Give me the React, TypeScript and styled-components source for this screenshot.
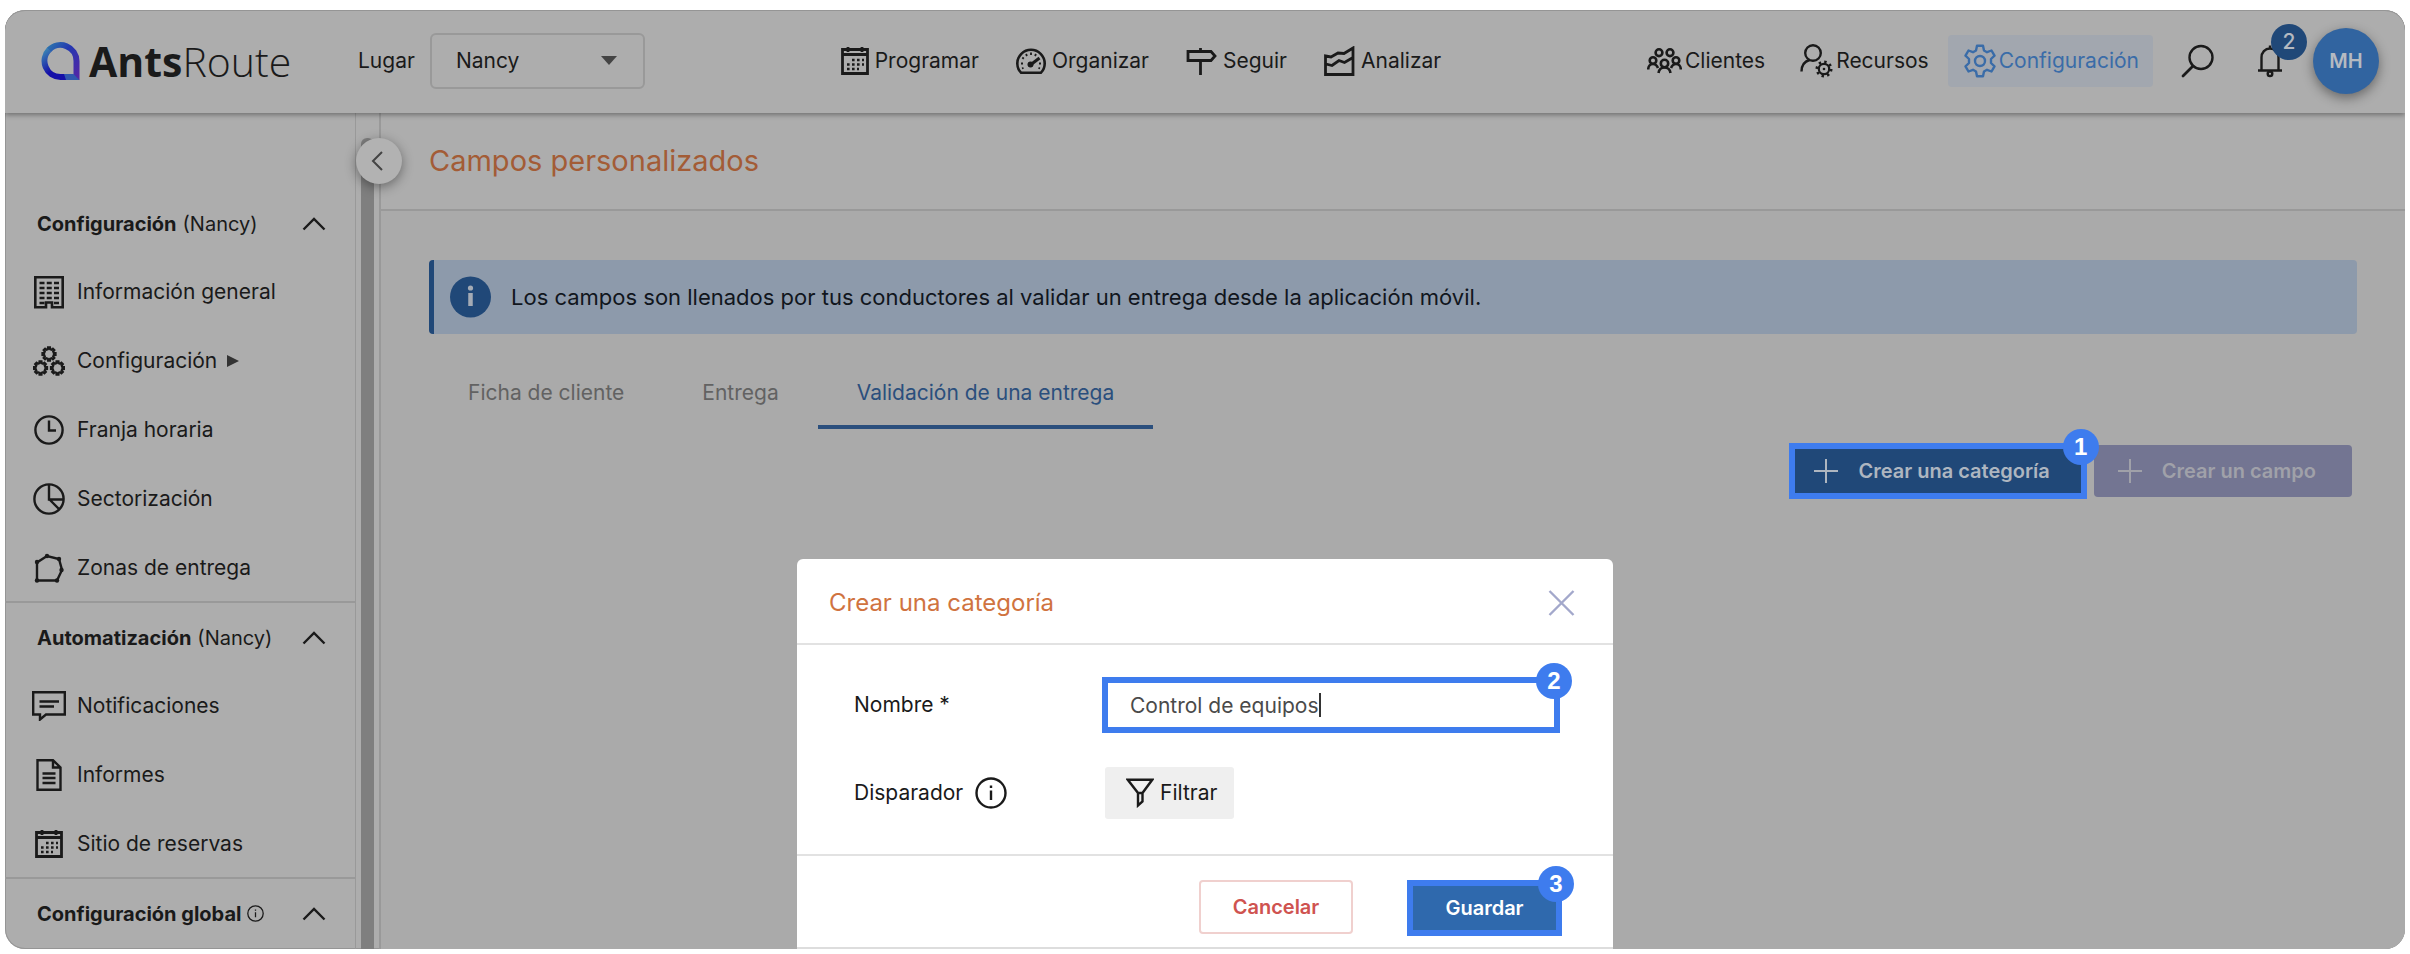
import React from 'react';
import styled, { createGlobalStyle, css } from 'styled-components';

const color = {
  surface: '#adadad',
  page: '#aaaaaa',
  line: '#999999',
  ink: '#1a1a1a',
  orange: '#a35c36',
  callout: '#3e7cee',
  navy: '#204878',
};

const GlobalStyle = createGlobalStyle`
  * { box-sizing: border-box; }
  body {
    margin: 0;
    padding: 10px 5px 5px;
    background: #ffffff;
    color: ${color.ink};
    font-family: Inter, "Liberation Sans", sans-serif;
    font-size: 21px;
    line-height: 28px;
  }
  button, input, select { font: inherit; color: inherit; }
  button { cursor: pointer; }
  h1, h2, p { margin: 0; font-weight: 400; }
  svg { display: block; flex: none; }
`;

const Frame = styled.div`
  position: relative;
  overflow: hidden;
  border-radius: 20px;
  background: ${color.surface};
  box-shadow: inset 0 0 0 1px #959595;
`;

/* ---------- Header ---------- */

const Header = styled.header`
  position: relative;
  z-index: 2;
  display: flex;
  align-items: center;
  justify-content: space-between;
  height: 103px;
  padding: 0 26px 2px 36px;
  background: ${color.surface};
  border-radius: 20px 20px 0 0;
  box-shadow: inset 0 1px 0 #959595, 0 2px 5px rgba(0, 0, 0, 0.35);
`;

const HeaderGroup = styled.div`
  display: flex;
  align-items: center;
`;

const Logo = styled.a`
  display: flex;
  align-items: center;
  gap: 9px;
  width: 248px;
  color: ${color.ink};
  text-decoration: none;
  font-family: "Open Sans", "Noto Sans", sans-serif;
  font-size: 41px;
  font-weight: 300;
  line-height: 56px;
  b { font-weight: 700; }
`;

const PlaceLabel = styled.label`
  margin: 0 15px 0 69px;
`;

const SelectBox = styled.div`
  display: flex;
  align-items: center;
  width: 215px;
  height: 56px;
  border: 2px solid #999999;
  border-radius: 6px;
  svg { margin-left: -42px; pointer-events: none; }
`;

const PlaceSelect = styled.select`
  width: 100%;
  height: 100%;
  padding: 0 24px;
  border: 0;
  background: none;
  appearance: none;
`;

const Nav = styled.nav<{ $gap: number }>`
  display: flex;
  align-items: center;
  gap: ${(p) => p.$gap}px;
`;

const MainNav = styled(Nav)`
  margin-left: 6px;
`;

const NavLink = styled.a<{ $boxed?: boolean; $active?: boolean }>`
  display: flex;
  align-items: center;
  gap: 6px;
  height: 52px;
  color: ${color.ink};
  text-decoration: none;
  ${(p) =>
    p.$boxed &&
    css`
      gap: 3px;
      padding: 0 14px 0 16px;
    `}
  ${(p) =>
    p.$active &&
    css`
      color: #3a6ca8;
      background: #a2a7af;
      border-radius: 4px;
    `}
`;

const IconButton = styled.button`
  position: relative;
  display: flex;
  align-items: center;
  justify-content: center;
  width: 34px;
  height: 52px;
  padding: 0;
  border: 0;
  background: none;
`;

const Tools = styled.div`
  display: flex;
  align-items: center;
  gap: 38px;
  margin-left: 28px;
`;

const Count = styled.span`
  position: absolute;
  top: -11px;
  left: 18px;
  width: 36px;
  height: 36px;
  border-radius: 50%;
  background: ${color.navy};
  color: #b4b9c0;
  font-weight: 500;
  line-height: 36px;
  text-align: center;
`;

const Avatar = styled.button`
  width: 66px;
  height: 66px;
  margin-left: 26px;
  padding: 0;
  border: 0;
  border-radius: 50%;
  background: #3164a0;
  color: #b5bac1;
  font-size: 20px;
  font-weight: 600;
  box-shadow: 0 4px 12px rgba(0, 0, 0, 0.4);
`;

/* ---------- Sidebar ---------- */

const Body = styled.div`
  display: flex;
`;

const Sidebar = styled.aside`
  flex: none;
  width: 351px;
  padding: 76px 0 3px;
  border-right: 1px solid ${color.line};
`;

const Section = styled.section`
  & + & { border-top: 2px solid ${color.line}; }
`;

const SectionHead = styled.button`
  display: flex;
  align-items: center;
  gap: 6px;
  width: 100%;
  height: 67px;
  padding: 2px 29px 0 32px;
  border: 0;
  background: none;
  font-size: 20px;
  text-align: left;
  svg:last-child { margin-left: auto; }
`;

const SideLink = styled.a`
  display: flex;
  align-items: center;
  gap: 10px;
  height: 69px;
  padding: 3px 0 0 26px;
  color: ${color.ink};
  text-decoration: none;
`;

const IconSlot = styled.span`
  display: flex;
  justify-content: center;
  width: 36px;
`;

const ScrollTrack = styled.div`
  position: relative;
  flex: none;
  width: 25px;
  padding: 25px 6px 0 5px;
  border-right: 2px solid ${color.line};
`;

const ScrollThumb = styled.div`
  width: 13px;
  height: 100%;
  border-radius: 6px 6px 0 0;
  background: #7f7f7f;
`;

const Collapse = styled.button`
  position: absolute;
  top: 25px;
  left: 0;
  display: flex;
  align-items: center;
  justify-content: center;
  width: 46px;
  height: 46px;
  padding: 0 4px 0 0;
  border: 0;
  border-radius: 50%;
  background: #b2b2b2;
  color: #444444;
  box-shadow: 0 3px 12px rgba(0, 0, 0, 0.4);
`;

/* ---------- Main area ---------- */

const Main = styled.main`
  flex: 1;
  min-width: 0;
  background: ${color.page};
`;

const TitleBar = styled.div`
  display: flex;
  align-items: center;
  height: 98px;
  padding-left: 48px;
  border-bottom: 2px solid ${color.line};
  background: ${color.surface};
`;

const Title = styled.h1`
  color: ${color.orange};
  font-size: 29px;
  line-height: 36px;
`;

const Content = styled.div`
  padding: 49px 48px 0 48px;
`;

const Banner = styled.div`
  display: flex;
  align-items: center;
  gap: 20px;
  height: 74px;
  padding-left: 16px;
  border-left: 5px solid ${color.navy};
  border-radius: 4px;
  background: #8d9aab;
  color: #11161d;
  font-size: 22px;
`;

const Tabs = styled.div`
  display: flex;
  margin-top: 23px;
`;

const Tab = styled.button<{ $active?: boolean }>`
  height: 72px;
  padding: 4px 39px 0;
  border: 0;
  border-bottom: 4px solid ${(p) => (p.$active ? '#2b4f7d' : 'transparent')};
  background: none;
  color: ${(p) => (p.$active ? '#2b4f7d' : '#626262')};
`;

const Actions = styled.div`
  display: flex;
  justify-content: flex-end;
  gap: 7px;
  margin: 14px 5px 0 0;
`;

const Callout = styled.div<{ $grow?: boolean }>`
  position: relative;
  display: flex;
  border: 6px solid ${color.callout};
  ${(p) => p.$grow && css`flex: 1;`}
`;

const Step = styled.span`
  position: absolute;
  top: -20px;
  right: -18px;
  width: 36px;
  height: 36px;
  border-radius: 50%;
  background: ${color.callout};
  color: #ffffff;
  font-family: "Liberation Sans", Arial, sans-serif;
  font-size: 24px;
  font-weight: 700;
  line-height: 36px;
  text-align: center;
`;

const AddButton = styled.button<{ $muted?: boolean }>`
  display: flex;
  align-items: center;
  gap: 20px;
  height: ${(p) => (p.$muted ? 52 : 44)}px;
  margin: ${(p) => (p.$muted ? '2px 0' : '0')};
  padding: 0 ${(p) => (p.$muted ? 36 : 31)}px 0 ${(p) => (p.$muted ? 24 : 19)}px;
  border: 0;
  border-radius: ${(p) => (p.$muted ? 4 : 0)}px;
  background: ${(p) => (p.$muted ? '#737592' : color.navy)};
  color: ${(p) => (p.$muted ? '#a0a1a9' : '#aeb6c0')};
  font-size: 20px;
  font-weight: 600;
`;

/* ---------- Dialog ---------- */

const Dialog = styled.div`
  position: absolute;
  z-index: 3;
  bottom: 0;
  left: 50%;
  width: 816px;
  margin-left: -408px;
  border-bottom: 2px solid #dddddd;
  border-radius: 6px 6px 0 0;
  background: #ffffff;
`;

const DialogHead = styled.div`
  display: flex;
  align-items: center;
  justify-content: space-between;
  height: 86px;
  padding: 4px 38px 0 32px;
  border-bottom: 2px solid #e2e2e2;
`;

const DialogTitle = styled.h2`
  color: #d0733f;
  font-size: 24px;
  line-height: 32px;
`;

const CloseButton = styled.button`
  padding: 0;
  border: 0;
  background: none;
`;

const Form = styled.div`
  display: flex;
  flex-direction: column;
  gap: 32px;
  padding: 32px 53px 33px 57px;
  border-bottom: 2px solid #e2e2e2;
`;

const Field = styled.div`
  display: flex;
  align-items: center;
  min-height: 56px;
`;

const FieldName = styled.div`
  display: flex;
  align-items: center;
  gap: 12px;
  width: 248px;
`;

const NameInput = styled.input`
  field-sizing: content;
  height: 44px;
  padding: 0 0 0 22px;
  border: 0;
  outline: 0;
  background: none;
  color: #4a4a4a;
  caret-color: transparent;
`;

const Caret = styled.i`
  align-self: center;
  width: 2px;
  height: 24px;
  background: #333333;
`;

const FilterButton = styled.button`
  display: flex;
  align-items: center;
  gap: 6px;
  height: 52px;
  margin-left: 3px;
  padding: 0 17px 0 21px;
  border: 0;
  border-radius: 3px;
  background: #efefef;
`;

const DialogFoot = styled.div`
  display: flex;
  align-items: flex-start;
  justify-content: flex-end;
  gap: 54px;
  height: 91px;
  padding: 24px 51px 0 0;
`;

const CancelButton = styled.button`
  width: 154px;
  height: 54px;
  border: 2px solid #f0d0ce;
  border-radius: 4px;
  background: #ffffff;
  color: #cf5350;
  font-size: 20px;
  font-weight: 600;
`;

const SaveButton = styled.button`
  width: 143px;
  height: 44px;
  border: 0;
  background: #2f69ad;
  color: #ffffff;
  font-size: 20px;
  font-weight: 600;
`;

/* ---------- Icons ---------- */

type IconProps = { w: number; h: number; sw?: number; children: React.ReactNode };

const Icon = ({ w, h, sw = 2.4, children }: IconProps) => (
  <svg width={w} height={h} viewBox={`0 0 ${w} ${h}`} fill="none" stroke="currentColor" strokeWidth={sw} aria-hidden="true">
    {children}
  </svg>
);

const gearPath = (cx: number, cy: number, ro: number, ri: number, teeth: number) => {
  const step = (Math.PI * 2) / teeth;
  const pts: string[] = [];
  for (let i = 0; i < teeth; i++) {
    const a = i * step - Math.PI / 2;
    [[-0.3, ri], [-0.19, ro], [0.19, ro], [0.3, ri]].forEach(([o, r]) => {
      pts.push(`${(cx + Math.cos(a + o * step) * r).toFixed(2)} ${(cy + Math.sin(a + o * step) * r).toFixed(2)}`);
    });
  }
  return `M${pts.join('L')}Z`;
};

const CalendarIcon = () => (
  <Icon w={28} h={30} sw={2.8}>
    <path d="M1.5 3.5H26.5V27.5H1.5ZM1.5 8.5H26.5" />
    <path d="M7 1V6M21 1V6" />
    <path d="M11 14H23M6 18.5H23M6 23H18" strokeDasharray="2.6 2.4" strokeWidth={2.4} />
  </Icon>
);

const GaugeIcon = () => (
  <Icon w={30} h={26} sw={2.6}>
    <path d="M5 24.7C2.6 22.3 1.3 19 1.3 15.5a13.7 13.7 0 0 1 27.4 0c0 3.5-1.3 6.8-3.7 9.2Z" />
    <path d="M15 4.5v2.5M10 6l1 2M20 6l-1 2M6.3 9.5l1.5 1.2M5 15.5h2M23 15.5h2M6 20.5l1.5-.6M24 20.5l-1.5-.6" strokeWidth={1.8} />
    <path d="M15 16.5L23.5 10" strokeWidth={3} />
    <circle cx="14.5" cy="16.5" r="3" fill="currentColor" stroke="none" />
  </Icon>
);

const SignIcon = () => (
  <Icon w={31} h={28} sw={2.8}>
    <path d="M2 4.5H25L29 9L25 13.5H2ZM14.5 1V4.5M14.5 15V28" />
  </Icon>
);

const ChartIcon = () => (
  <Icon w={31} h={30} sw={2.8}>
    <path d="M1.5 10L7 11L14 7L20 7.5L29 2V28.5H1.5ZM2 18L8 19.5L15 14.5L20.5 16.5L29 11.5" />
  </Icon>
);

const PeopleIcon = () => (
  <Icon w={35} h={26} sw={2.6}>
    <circle cx="12" cy="4.7" r="3.4" />
    <circle cx="23" cy="4.7" r="3.4" />
    <circle cx="6" cy="12.5" r="3.3" />
    <circle cx="29" cy="12.5" r="3.3" />
    <circle cx="17.5" cy="15.5" r="3.7" />
    <path d="M1.2 21.5C1.2 18 3.5 16 6 16S10 17.5 11 20M24 20C25 17.5 26.5 16 29 16S33.8 18 33.8 21.5M11.5 25C12 21.5 14 19.5 17.5 19.5S23 21.5 23.5 25" />
  </Icon>
);

const UserGearIcon = () => (
  <Icon w={33} h={35}>
    <circle cx="13" cy="10" r="7.8" />
    <path d="M1.5 28.5C1.5 22.5 4.5 18.5 9.5 17" />
    <circle cx="24" cy="26" r="5.2" strokeWidth={2.2} />
    <circle cx="24" cy="26" r="7.2" strokeWidth={2.6} strokeDasharray="2.4 3.255" />
    <circle cx="24" cy="26" r="1.3" fill="currentColor" stroke="none" />
  </Icon>
);

const GearIcon = () => (
  <Icon w={32} h={34}>
    <path
      strokeLinejoin="round"
      d="M13 1.7H19L20 6.5L23 8.2L27.5 6.5L30.5 11.7L27 15V19L30.5 22.3L27.5 27.5L23 25.8L20 27.5L19 32.3H13L12 27.5L9 25.8L4.5 27.5L1.5 22.3L5 19V15L1.5 11.7L4.5 6.5L9 8.2L12 6.5Z"
    />
    <circle cx="16" cy="17" r="5" />
  </Icon>
);

const SearchIcon = () => (
  <Icon w={34} h={34}>
    <circle cx="20" cy="13.5" r="11.5" />
    <path d="M12 22L2 32" strokeWidth={2.8} strokeLinecap="round" />
  </Icon>
);

const BellIcon = () => (
  <Icon w={26} h={34}>
    <path d="M4.5 26V13.5C4.5 8.5 8 4.5 13 4.5S21.5 8.5 21.5 13.5V26M1 26.5H25M13 1.5V4.5" />
    <circle cx="13" cy="29.8" r="2.3" />
  </Icon>
);

const BuildingIcon = () => (
  <Icon w={30} h={33} sw={2.6}>
    <path d="M1.3 1.3H28.7V31.3H18V26.5H12V31.3H1.3Z" />
    <path d="M5.5 7H25M5.5 12H25M5.5 17H25M5.5 22H25M5.5 27H10.5M20 27H25" strokeWidth={2.4} strokeDasharray="5 2.25" />
  </Icon>
);

const GearsIcon = () => (
  <Icon w={32} h={30} sw={2.2}>
    {[[16, 8], [7.5, 22], [24.5, 22]].map(([x, y]) => (
      <path key={x} d={gearPath(x, y, 6.6, 4.9, 8)} />
    ))}
  </Icon>
);

const ClockIcon = () => (
  <Icon w={30} h={30}>
    <circle cx="15" cy="15" r="13.6" />
    <path d="M15 5.5V15.5H22" />
  </Icon>
);

const PieIcon = () => (
  <Icon w={32} h={32}>
    <circle cx="16" cy="16" r="14.6" />
    <path d="M16 2V16.5H30M16 16L26.5 26.5" />
  </Icon>
);

const ZoneIcon = () => (
  <Icon w={30} h={30}>
    <path d="M3 27.5V9.5L13 3L25 6L28 17L23 27.5Z" />
    {[[3, 27.5], [3, 9], [13, 3], [25, 6], [27.5, 17], [23, 27.5]].map(([x, y]) => (
      <circle key={`${x}-${y}`} cx={x} cy={y} r="2.2" fill="currentColor" stroke="none" />
    ))}
  </Icon>
);

const MessageIcon = () => (
  <Icon w={34} h={30} sw={2.4}>
    <path d="M1.2 1.2H32.8V23.5H14L8 28.5V23.5H1.2ZM7.5 10.5H27M7.5 15.5H22" />
  </Icon>
);

const FileIcon = () => (
  <Icon w={26} h={32}>
    <path d="M1.5 1.2H17L24.5 8.5V30.8H1.5ZM17 1.2V8.5H24.5M6.5 14.5H19.5M6.5 19H19.5M6.5 24H19.5" />
  </Icon>
);

const InfoIcon = ({ size }: { size: number }) => (
  <svg width={size} height={size} viewBox="0 0 32 32" fill="none" stroke="currentColor" strokeWidth="2.4" aria-hidden="true">
    <circle cx="16" cy="16" r="14.5" />
    <path d="M16 13.5V23M16 8.5V11" />
  </svg>
);

const InfoBadge = () => (
  <svg width="41" height="42" viewBox="0 0 41 42" aria-hidden="true">
    <circle cx="20.5" cy="21" r="20.5" fill={color.navy} />
    <path d="M20.5 17V30" stroke="#a4abb5" strokeWidth="4.5" />
    <circle cx="20.5" cy="12" r="2.6" fill="#a4abb5" />
  </svg>
);

const ChevronUp = () => (
  <Icon w={24} h={14}>
    <path d="M1.5 12.5L12 2L22.5 12.5" />
  </Icon>
);

const PlusIcon = () => (
  <Icon w={24} h={24} sw={2}>
    <path d="M12 0V24M0 12H24" />
  </Icon>
);

const FilterIcon = () => (
  <Icon w={28} h={30}>
    <path d="M1.8 1.8H26.2L16.5 15V23.5L12 27.5V15ZM12 15H16.5" />
  </Icon>
);

const LogoMark = () => (
  <svg width="39" height="38" viewBox="0 0 39 38" fill="none" aria-hidden="true">
    <defs>
      <linearGradient id="drop-top" x1="0" y1="0" x2="1" y2="1">
        <stop offset="0" stopColor="#2c72ae" />
        <stop offset="0.4" stopColor="#2438b0" />
        <stop offset="1" stopColor="#5426a6" />
      </linearGradient>
      <linearGradient id="drop-left" x1="0" y1="0" x2="0.5" y2="1">
        <stop offset="0" stopColor="#3c86b4" />
        <stop offset="0.8" stopColor="#150fa8" />
      </linearGradient>
    </defs>
    <path d="M19.5 35A16 16 0 0 1 8.2 7.7" stroke="url(#drop-left)" strokeWidth="6" />
    <path d="M19 35H26" stroke="#150fa8" strokeWidth="6" />
    <path d="M8 7.9A16 16 0 0 1 35.5 19V38" stroke="url(#drop-top)" strokeWidth="6" />
    <path d="M23 32H32.5L38.5 38H25Z" fill="#3058ae" />
  </svg>
);

/* ---------- Page ---------- */

type SideSection = {
  title: string;
  place?: string;
  info?: boolean;
  items: { label: string; icon: React.ReactNode; more?: boolean }[];
};

const sections: SideSection[] = [
  {
    title: 'Configuración',
    place: '(Nancy)',
    items: [
      { label: 'Información general', icon: <BuildingIcon /> },
      { label: 'Configuración', icon: <GearsIcon />, more: true },
      { label: 'Franja horaria', icon: <ClockIcon /> },
      { label: 'Sectorización', icon: <PieIcon /> },
      { label: 'Zonas de entrega', icon: <ZoneIcon /> },
    ],
  },
  {
    title: 'Automatización',
    place: '(Nancy)',
    items: [
      { label: 'Notificaciones', icon: <MessageIcon /> },
      { label: 'Informes', icon: <FileIcon /> },
      { label: 'Sitio de reservas', icon: <CalendarIcon /> },
    ],
  },
  { title: 'Configuración global', info: true, items: [] },
];

export default function App() {
  return (
    <>
      <GlobalStyle />
      <Frame>
        <Header>
          <HeaderGroup>
            <Logo href="#">
              <LogoMark />
              <span><b>Ants</b>Route</span>
            </Logo>
            <PlaceLabel htmlFor="place">Lugar</PlaceLabel>
            <SelectBox>
              <PlaceSelect id="place" defaultValue="Nancy">
                <option>Nancy</option>
              </PlaceSelect>
              <svg width="16" height="9" viewBox="0 0 16 9" aria-hidden="true">
                <path d="M0 0H16L8 9Z" fill="#444444" />
              </svg>
            </SelectBox>
          </HeaderGroup>
          <MainNav $gap={37}>
            <NavLink href="#"><CalendarIcon />Programar</NavLink>
            <NavLink href="#"><GaugeIcon />Organizar</NavLink>
            <NavLink href="#"><SignIcon />Seguir</NavLink>
            <NavLink href="#"><ChartIcon />Analizar</NavLink>
          </MainNav>
          <HeaderGroup>
            <Nav $gap={5}>
              <NavLink href="#" $boxed><PeopleIcon />Clientes</NavLink>
              <NavLink href="#" $boxed><UserGearIcon />Recursos</NavLink>
              <NavLink href="#" $boxed $active><GearIcon />Configuración</NavLink>
            </Nav>
            <Tools>
              <IconButton aria-label="Buscar"><SearchIcon /></IconButton>
              <IconButton aria-label="Avisos"><BellIcon /><Count>2</Count></IconButton>
            </Tools>
            <Avatar>MH</Avatar>
          </HeaderGroup>
        </Header>

        <Body>
          <Sidebar>
            {sections.map((s) => (
              <Section key={s.title}>
                <SectionHead>
                  <b>{s.title}</b>
                  {s.place && <span>{s.place}</span>}
                  {s.info && <InfoIcon size={17} />}
                  <ChevronUp />
                </SectionHead>
                {s.items.map((item) => (
                  <SideLink href="#" key={item.label}>
                    <IconSlot>{item.icon}</IconSlot>
                    {item.label}
                    {item.more && (
                      <svg width="12" height="12" viewBox="0 0 12 12" aria-hidden="true">
                        <path d="M0 0L12 6L0 12Z" fill="#333333" />
                      </svg>
                    )}
                  </SideLink>
                ))}
              </Section>
            ))}
          </Sidebar>
          <ScrollTrack>
            <ScrollThumb />
            <Collapse aria-label="Contraer menú">
              <Icon w={12} h={20} sw={2}>
                <path d="M11 1L2 10L11 19" />
              </Icon>
            </Collapse>
          </ScrollTrack>
          <Main>
            <TitleBar>
              <Title>Campos personalizados</Title>
            </TitleBar>
            <Content>
              <Banner>
                <InfoBadge />
                <p>Los campos son llenados por tus conductores al validar un entrega desde la aplicación móvil.</p>
              </Banner>
              <Tabs role="tablist">
                <Tab role="tab">Ficha de cliente</Tab>
                <Tab role="tab">Entrega</Tab>
                <Tab role="tab" aria-selected="true" $active>Validación de una entrega</Tab>
              </Tabs>
              <Actions>
                <Callout>
                  <AddButton><PlusIcon />Crear una categoría</AddButton>
                  <Step>1</Step>
                </Callout>
                <AddButton $muted><PlusIcon />Crear un campo</AddButton>
              </Actions>
            </Content>
          </Main>
        </Body>

        <Dialog role="dialog" aria-labelledby="dialog-title">
          <DialogHead>
            <DialogTitle id="dialog-title">Crear una categoría</DialogTitle>
            <CloseButton aria-label="Cerrar">
              <svg width="27" height="26" viewBox="0 0 27 26" fill="none" stroke="#a3a8cb" strokeWidth="2.4" aria-hidden="true">
                <path d="M1.5 1L25.5 25M25.5 1L1.5 25" />
              </svg>
            </CloseButton>
          </DialogHead>
          <Form>
            <Field>
              <FieldName><label htmlFor="name">Nombre *</label></FieldName>
              <Callout $grow>
                <NameInput id="name" type="text" defaultValue="Control de equipos" />
                <Caret />
                <Step>2</Step>
              </Callout>
            </Field>
            <Field>
              <FieldName><span>Disparador</span><InfoIcon size={32} /></FieldName>
              <FilterButton><FilterIcon />Filtrar</FilterButton>
            </Field>
          </Form>
          <DialogFoot>
            <CancelButton>Cancelar</CancelButton>
            <Callout>
              <SaveButton>Guardar</SaveButton>
              <Step>3</Step>
            </Callout>
          </DialogFoot>
        </Dialog>
      </Frame>
    </>
  );
}
